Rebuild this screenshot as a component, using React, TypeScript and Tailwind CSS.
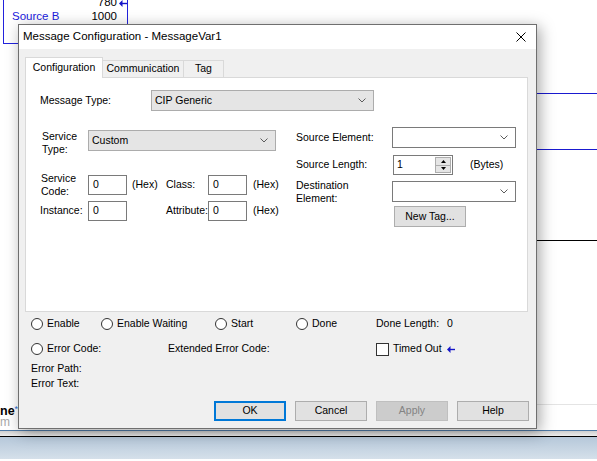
import React from 'react';

type BoxProps = { className?: string; children?: React.ReactNode };

function Chevron() {
    return (
        <svg width="8" height="5" viewBox="0 0 8 5" className="shrink-0">
            <path d="M0.5 0.5 L4 4 L7.5 0.5" fill="none" stroke="#5c5c5c" strokeWidth="1" />
        </svg>
    );
}

function Combo({ value, grey, className }: { value?: string; grey?: boolean; className?: string }) {
    return (
        <div
            className={`flex items-center h-[21px] border pl-[3px] pr-[7px] ${grey ? 'bg-[#e5e5e5] border-[#acacac]' : 'bg-white border-[#7a7a7a]'} ${className ?? ''}`}
        >
            <span className="flex-1">{value}</span>
            <Chevron />
        </div>
    );
}

function TextBox({ value, className }: { value: string; className?: string }) {
    return (
        <div className={`flex items-center h-[20px] w-[39px] border border-[#7a7a7a] bg-white pl-[4px] ${className ?? ''}`}>
            {value}
        </div>
    );
}

function Radio({ label, className }: { label: string; className?: string }) {
    return (
        <div className={`flex items-center gap-[4px] ${className ?? ''}`}>
            <span className="w-[12px] h-[12px] rounded-full border border-[#333333] bg-white shrink-0" />
            <span>{label}</span>
        </div>
    );
}

function Arrow({ className }: { className?: string }) {
    return (
        <svg width="8" height="7" viewBox="0 0 8 7" className={className}>
            <path d="M0 3.5 L3.5 0 L3.5 7 Z" fill="#1414c8" />
            <rect x="3" y="2.8" width="5" height="1.4" fill="#1414c8" />
        </svg>
    );
}

function Btn({ label, kind }: { label: string; kind?: 'default' | 'disabled' }) {
    if (kind === 'default')
        return (
            <div className="w-[72px] h-[20px] flex items-center justify-center bg-[#e1e1e1] border-2 border-[#0078d7]">
                {label}
            </div>
        );
    if (kind === 'disabled')
        return (
            <div className="w-[72px] h-[20px] flex items-center justify-center bg-[#cccccc] border border-[#bfbfbf] text-[#838383]">
                {label}
            </div>
        );
    return (
        <div className="w-[72px] h-[20px] flex items-center justify-center bg-[#e1e1e1] border border-[#adadad]">
            {label}
        </div>
    );
}

function Hex({ className }: BoxProps) {
    return <span className={className}>(Hex)</span>;
}

function Spinner() {
    return (
        <div className="ml-auto mr-[1px] w-[16px] h-[16px] flex flex-col border border-[#adadad] bg-[#e5e5e5]">
            <div className="flex-1 flex items-center justify-center border-b border-[#adadad]">
                <svg width="5" height="3" viewBox="0 0 5 3"><path d="M0 3 L2.5 0 L5 3 Z" fill="#000" /></svg>
            </div>
            <div className="flex-1 flex items-center justify-center">
                <svg width="5" height="3" viewBox="0 0 5 3"><path d="M0 0 L2.5 3 L5 0 Z" fill="#000" /></svg>
            </div>
        </div>
    );
}

function Ladder() {
    return (
        <>
            {/* instruction box behind the dialog */}
            <div className="absolute left-[3px] top-0 w-px h-[44px] bg-[#2222dd]" />
            <div className="absolute left-[3px] top-[43px] w-[16px] h-px bg-[#2222dd]" />
            <div className="absolute left-[127px] top-0 w-px h-[25px] bg-[#2222dd]" />
            <div className="absolute left-[90px] top-[-4px] w-[27px] text-right text-[11.5px] leading-[13px]">780</div>
            <Arrow className="absolute left-[119px] top-[0px]" />
            <div className="absolute left-[12px] top-[9px] text-[11.5px] leading-[14px] text-[#2020dd]">Source B</div>
            <div className="absolute left-[80px] top-[9px] w-[37px] text-right text-[11.5px] leading-[14px]">1000</div>

            {/* rungs on the right */}
            <div className="absolute left-[530px] right-0 top-[93px] h-px bg-[#1a1ad0]" />
            <div className="absolute left-[530px] right-0 top-[149px] h-px bg-[#1a1ad0]" />
            <div className="absolute left-[530px] right-0 top-[240px] h-px bg-black" />
            <div className="absolute left-[530px] right-0 top-[404px] h-px bg-[#e4e4e4]" />

            {/* cut off routine name */}
            <div className="absolute left-0 top-[405px] flex items-start text-[12.5px] leading-[12px] font-bold">
                ne<span className="text-[#2a6ad0] text-[9px] leading-[9px] font-normal">*</span>
            </div>
            <div className="absolute left-0 top-[417px] text-[12px] leading-[10px] text-[#a8a8a8]">m</div>
        </>
    );
}

export default function App() {
    return (
        <div className="font-['Liberation_Sans',Arial,sans-serif] w-[597px] h-[461px] bg-white flex flex-col overflow-hidden text-black text-[10.5px]">
            <div className="relative h-[430px] shrink-0">
                <Ladder />

                <div className="absolute left-[18px] top-[24px] w-[519px] h-[405px] border border-[#6f6f6f] shadow-[3px_3px_14px_rgba(0,0,0,0.35)] flex flex-col bg-[#f0f0f0]">
                    {/* title bar */}
                    <div className="h-[24px] bg-white flex items-center justify-between pl-[4px] pr-[10px]">
                        <span className="text-[11.5px]">Message Configuration - MessageVar1</span>
                        <svg width="10" height="10" viewBox="0 0 10 10">
                            <path d="M0.5 0.5 L9.5 9.5 M9.5 0.5 L0.5 9.5" stroke="#000" strokeWidth="1" />
                        </svg>
                    </div>

                    {/* tabs */}
                    <div className="pt-[8px] pl-[6px] pr-[8px]">
                        <div className="flex items-end h-[20px]">
                            <div className="relative z-10 -mb-px h-[21px] w-[78px] flex items-center justify-center bg-white border-x border-t border-[#d9d9d9]">
                                Configuration
                            </div>
                            <div className="h-[17px] w-[82px] -ml-px flex items-center justify-center border-x border-t border-[#d9d9d9]">
                                Communication
                            </div>
                            <div className="h-[17px] w-[41px] -ml-px flex items-center justify-center border-x border-t border-[#d9d9d9]">
                                Tag
                            </div>
                        </div>

                        <div className="h-[235px] border border-[#d9d9d9] bg-white pl-[14px] pt-[12px]">
                            <div className="flex items-center">
                                <span className="w-[111px]">Message Type:</span>
                                <Combo grey value="CIP Generic" className="w-[223px]" />
                            </div>

                            <div className="flex mt-[16px]">
                                {/* left column */}
                                <div className="w-[256px] flex flex-col pt-[3px]">
                                    <div className="flex items-start h-[21px]">
                                        <span className="ml-[2px] w-[46px] h-[21px] leading-[13px]">Service<br />Type:</span>
                                        <Combo grey value="Custom" className="w-[188px]" />
                                    </div>
                                    <div className="flex items-center h-[20px] mt-[24px]">
                                        <span className="self-start -mt-[3px] h-[20px] ml-[1px] w-[47px] leading-[13px]">Service<br />Code:</span>
                                        <TextBox value="0" />
                                        <Hex className="ml-[5px] w-[34px]" />
                                        <span className="w-[42px]">Class:</span>
                                        <TextBox value="0" />
                                        <Hex className="ml-[6px]" />
                                    </div>
                                    <div className="flex items-center h-[20px] mt-[6px]">
                                        <span className="w-[48px]">Instance:</span>
                                        <TextBox value="0" />
                                        <span className="w-[39px]" />
                                        <span className="w-[42px]">Attribute:</span>
                                        <TextBox value="0" />
                                        <Hex className="ml-[6px]" />
                                    </div>
                                </div>

                                {/* right column */}
                                <div className="flex flex-col">
                                    <div className="flex items-center">
                                        <span className="w-[96px]">Source Element:</span>
                                        <Combo className="w-[124px]" />
                                    </div>
                                    <div className="flex items-center mt-[7px]">
                                        <span className="w-[97px]">Source Length:</span>
                                        <div className="flex items-center h-[20px] w-[60px] border border-[#7a7a7a] bg-white pl-[3px]">
                                            1
                                            <Spinner />
                                        </div>
                                        <span className="ml-[17px]">(Bytes)</span>
                                    </div>
                                    <div className="flex items-start h-[21px] mt-[6px]">
                                        <span className="w-[96px] h-[21px] -mt-[2px] leading-[13px]">Destination<br />Element:</span>
                                        <Combo className="w-[124px]" />
                                    </div>
                                    <div className="mt-[4px] ml-[98px] w-[72px] h-[21px] flex items-center justify-center bg-[#e1e1e1] border border-[#adadad]">
                                        New Tag...
                                    </div>
                                </div>
                            </div>
                        </div>
                    </div>

                    {/* status */}
                    <div className="flex items-center h-[14px] mt-[5px] pl-[12px]">
                        <Radio label="Enable" className="w-[70px]" />
                        <Radio label="Enable Waiting" className="w-[114px]" />
                        <Radio label="Start" className="w-[81px]" />
                        <Radio label="Done" className="w-[80px]" />
                        <span>Done Length:</span>
                        <span className="ml-[8px]">0</span>
                    </div>
                    <div className="flex items-center h-[14px] mt-[11px] pl-[12px]">
                        <Radio label="Error Code:" className="w-[137px]" />
                        <span className="w-[208px]">Extended Error Code:</span>
                        <span className="w-[13px] h-[13px] border border-[#333333] bg-white" />
                        <span className="ml-[4px]">Timed Out</span>
                        <Arrow className="ml-[5px]" />
                    </div>
                    <div className="mt-[5px] pl-[12px] leading-[15px]">
                        <div>Error Path:</div>
                        <div>Error Text:</div>
                    </div>

                    {/* buttons */}
                    <div className="flex justify-end gap-[9px] pr-[7px] mt-[10px]">
                        <Btn label="OK" kind="default" />
                        <Btn label="Cancel" />
                        <Btn label="Apply" kind="disabled" />
                        <Btn label="Help" />
                    </div>
                </div>
            </div>
            <div className="h-px shrink-0 bg-[#4f7aa6]" />
            <div className="h-[5px] shrink-0 bg-linear-to-b from-[#cfcfcf] to-[#ececec]" />
            <div className="h-px shrink-0 bg-black" />
            <div className="h-[22px] shrink-0 bg-linear-to-b from-[#b6c8da] to-[#d5e0ea]" />
            <div className="flex-1 bg-white" />
        </div>
    );
}
